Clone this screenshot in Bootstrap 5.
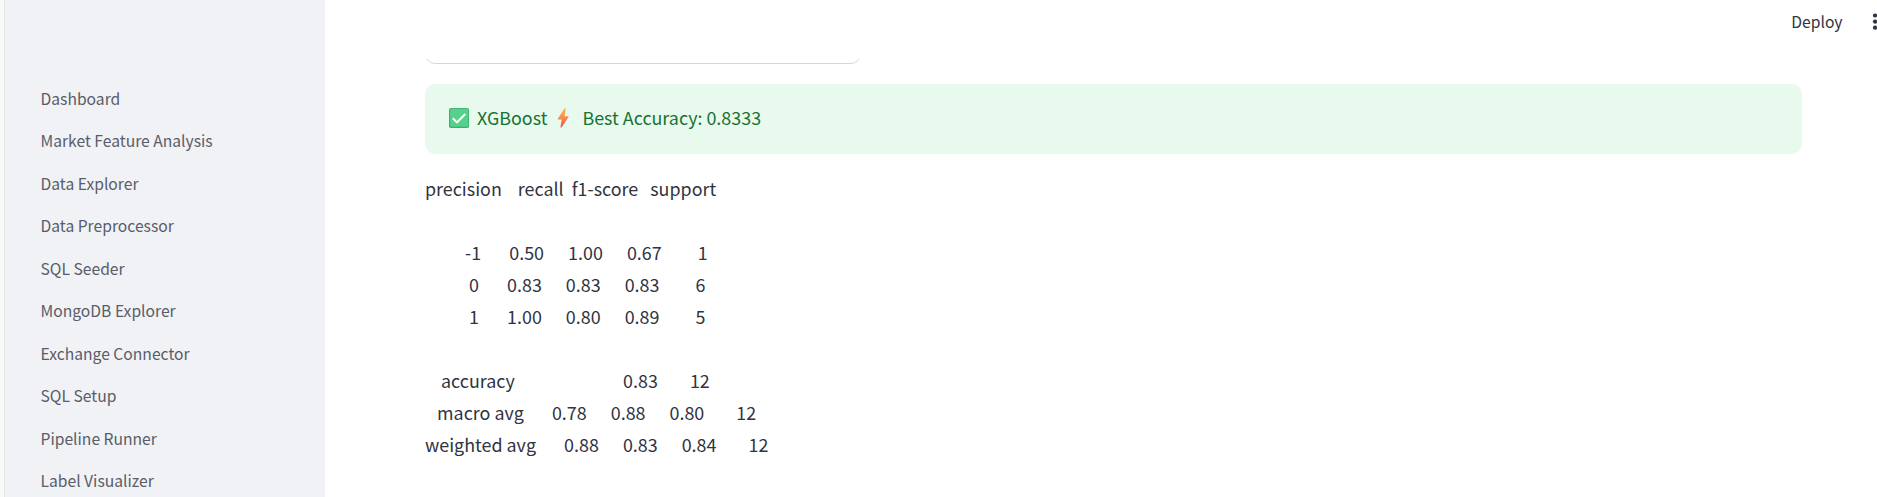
<!DOCTYPE html>
<html lang="en">
<head>
<meta charset="utf-8">
<meta name="viewport" content="width=device-width, initial-scale=1">
<title>XGBoost report</title>
<link href="https://cdn.jsdelivr.net/npm/bootstrap@5.3.0/dist/css/bootstrap.min.css" rel="stylesheet">
<style>
body { font-family: "Source Sans Pro", "Noto Sans CJK SC", sans-serif; font-size: 17.9px; line-height: 32px; color: #31333f; background: #fff; }
.edge { width: 5px; background: #f9f9f9; border-right: 1px solid #e6e6e8; }
.side { width: 320px; background: #f0f2f6; padding: 77px 0 0 25.5px; }
.side .nav-link { color: #5a5c68; font-size: 15.66px; line-height: 35px; height: 42.5px; padding: 3.75px 10px; }
.topbar { height: 59px; padding: 7px 0 0; }
.topbar .deploy { font-size: 15.68px; line-height: 30px; margin-right: 29.5px; color: #31333f; }
.dots { width: 6px; height: 18px; margin: 6px -1px 0 0; }
.content-area { padding: 0 75px 0 100px; }
.clip { height: 5px; }
.field-box { width: 436px; height: 50px; border: 1px solid #d5d6d9; border-radius: 10px; }
.success-box { height: 70px; margin-top: 20px; padding: 0 24px 2px; border-radius: 10px; background: #e8f9ee; color: #177233; }
.success-box span { padding-bottom: 2px; }
.bolt { margin: 0 13px 0 10px; }
.report { font: inherit; margin-top: 17.5px; }
</style>
</head>
<body class="vh-100 overflow-hidden">
<div class="d-flex vh-100">
  <div class="edge flex-shrink-0"></div>
  <aside class="side flex-shrink-0 overflow-hidden">
    <nav class="nav flex-column flex-nowrap">
      <a class="nav-link" href="#">Dashboard</a>
      <a class="nav-link" href="#">Market Feature Analysis</a>
      <a class="nav-link" href="#">Data Explorer</a>
      <a class="nav-link" href="#">Data Preprocessor</a>
      <a class="nav-link" href="#">SQL Seeder</a>
      <a class="nav-link" href="#">MongoDB Explorer</a>
      <a class="nav-link" href="#">Exchange Connector</a>
      <a class="nav-link" href="#">SQL Setup</a>
      <a class="nav-link" href="#">Pipeline Runner</a>
      <a class="nav-link" href="#">Label Visualizer</a>
    </nav>
  </aside>
  <div class="flex-grow-1 overflow-hidden">
    <header class="topbar d-flex justify-content-end align-items-start">
      <span class="deploy">Deploy</span>
      <svg class="dots flex-shrink-0" viewBox="0 0 6 18" fill="#31333f"><circle cx="3" cy="2.5" r="2.1"/><circle cx="3" cy="8.6" r="2.1"/><circle cx="3" cy="14.7" r="2.1"/></svg>
    </header>
    <main class="content-area">
      <div class="clip overflow-hidden d-flex align-items-end"><div class="field-box flex-shrink-0"></div></div>
      <div class="success-box d-flex align-items-center" role="alert">
        <svg width="20" height="20" viewBox="0 0 20 20" class="flex-shrink-0">
          <rect width="20" height="20" rx="1.8" fill="#3fae72"/><rect x="1.2" y=".8" width="18" height="18" rx="1.2" fill="#56d18b"/>
          <path d="M3.8 10.2 8 14.4 16.3 6" fill="none" stroke="#fff" stroke-width="2"/>
        </svg>
        <span class="ms-2">XGBoost</span>
        <svg width="12" height="20" viewBox="0 0 12 20" class="flex-shrink-0 bolt">
          <defs><linearGradient id="flame" x1="0" y1="0" x2="0" y2="1"><stop offset="0" stop-color="#fcb64c"/><stop offset=".5" stop-color="#fb8a4b"/><stop offset="1" stop-color="#f0484f"/></linearGradient></defs>
          <path d="M7.6.3 1 10.4q-.5 1 .5 1h3.2L3.5 19q.2 1.2 1.2.3L11.4 9.2q.4-1-.6-1H7.5L8.7.9Q8.5-.4 7.6.3Z" fill="url(#flame)"/>
        </svg>
        <span>Best Accuracy: 0.8333</span>
      </div>
<pre class="report mb-0 overflow-hidden">precision    recall  f1-score   support

          -1       0.50      1.00      0.67         1
           0       0.83      0.83      0.83         6
           1       1.00      0.80      0.89         5

    accuracy                           0.83        12
   macro avg       0.78      0.88      0.80        12
weighted avg       0.88      0.83      0.84        12</pre>
    </main>
  </div>
</div>
<script src="https://cdn.jsdelivr.net/npm/bootstrap@5.3.0/dist/js/bootstrap.bundle.min.js"></script>
</body>
</html>
